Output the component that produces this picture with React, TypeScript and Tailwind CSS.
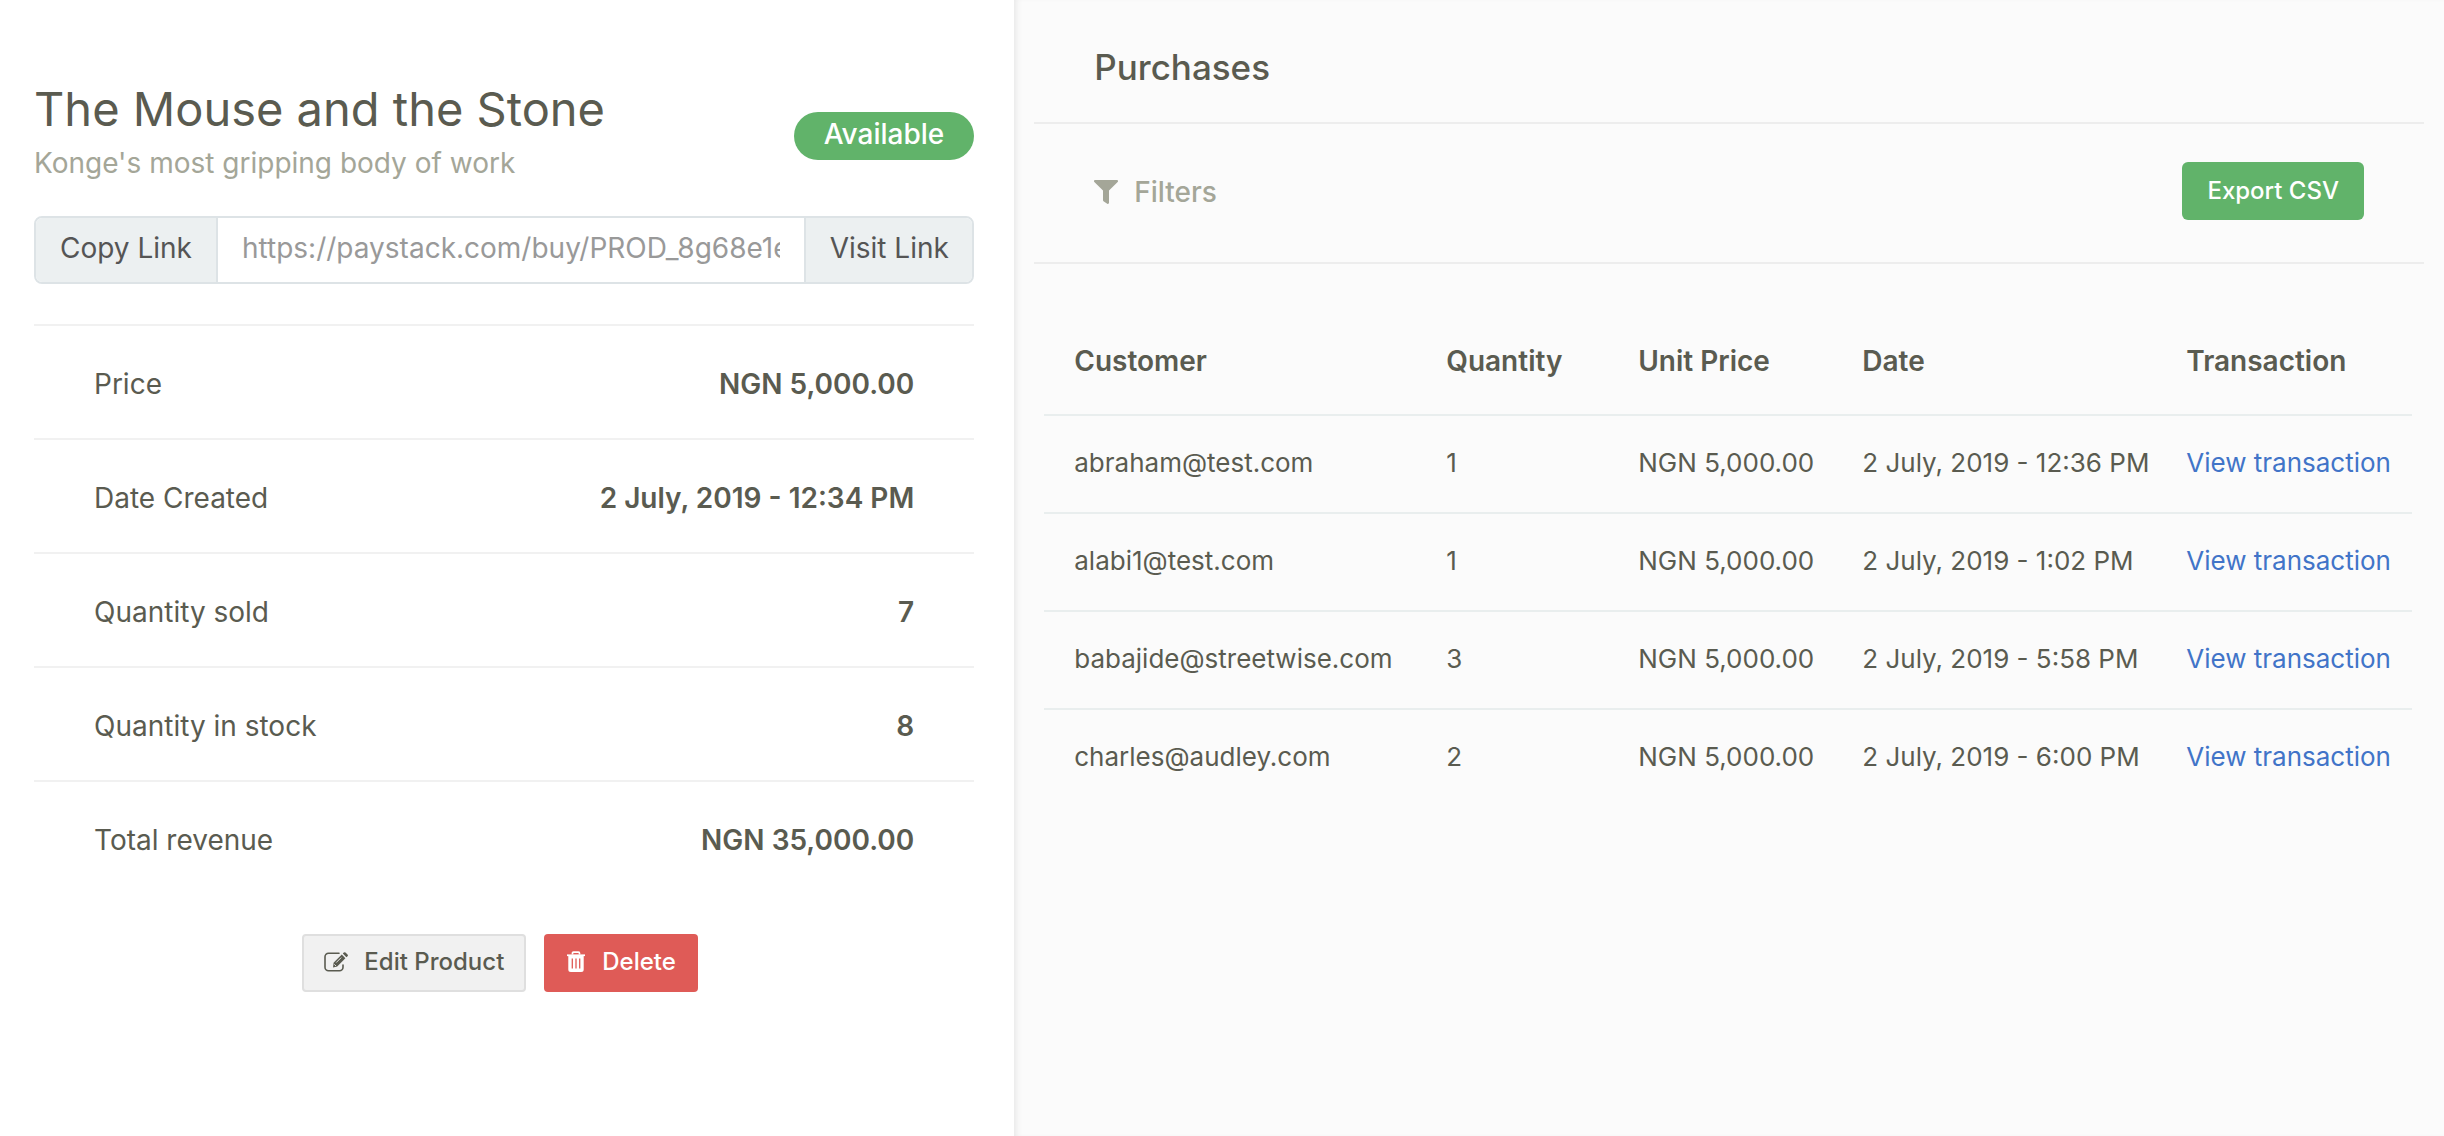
import { FaFilter } from "react-icons/fa";

const PRODUCT = {
  name: "The Mouse and the Stone",
  description: "Konge's most gripping body of work",
  link: "https://paystack.com/buy/PROD_8g68e1e5xk2",
};

const DETAILS = [
  { label: "Price", value: "NGN 5,000.00" },
  { label: "Date Created", value: "2 July, 2019 - 12:34 PM" },
  { label: "Quantity sold", value: "7" },
  { label: "Quantity in stock", value: "8" },
  { label: "Total revenue", value: "NGN 35,000.00" },
];

const PURCHASES = [
  { customer: "abraham@test.com", quantity: 1, price: "NGN 5,000.00", date: "2 July, 2019 - 12:36 PM" },
  { customer: "alabi1@test.com", quantity: 1, price: "NGN 5,000.00", date: "2 July, 2019 - 1:02 PM" },
  { customer: "babajide@streetwise.com", quantity: 3, price: "NGN 5,000.00", date: "2 July, 2019 - 5:58 PM" },
  { customer: "charles@audley.com", quantity: 2, price: "NGN 5,000.00", date: "2 July, 2019 - 6:00 PM" },
];

function EditIcon() {
  return (
    <svg viewBox="0 0 24 20" className="h-5 w-6" fill="none" aria-hidden="true">
      <path
        d="M15 1.2H4.5A3.5 3.5 0 0 0 1 4.7v10.6a3.5 3.5 0 0 0 3.5 3.5h11a3.5 3.5 0 0 0 3.5-3.5V13"
        stroke="currentColor"
        strokeWidth="1.6"
        strokeLinecap="round"
      />
      <path d="M17.8 2.6 21.4 6.2 13.2 14.4 9 15.4l.6-4.6z" fill="currentColor" />
      <path d="m18.8 1.6 1-1a1.2 1.2 0 0 1 1.7 0l2 2a1.2 1.2 0 0 1 0 1.7l-1.1 1z" fill="currentColor" />
      <path d="m12.2 10.6 5-5M10.3 12.3l1.7 1.7" stroke="#f1f1f1" strokeWidth="0.9" />
    </svg>
  );
}

function TrashIcon() {
  return (
    <svg viewBox="0 0 20 22" className="h-[22px] w-5" fill="none" aria-hidden="true">
      <path d="M6.5 3.5V2.2c0-.6.4-1 1-1h5c.6 0 1 .4 1 1v1.3" stroke="currentColor" strokeWidth="1.7" />
      <path d="M1 3.4h18v1.7H1z" fill="currentColor" />
      <path d="M2.3 5h15.4v13.5a2.5 2.5 0 0 1-2.5 2.5H4.8a2.5 2.5 0 0 1-2.5-2.5z" fill="currentColor" />
      <path d="M6.3 7.5v10M10 7.5v10M13.7 7.5v10" stroke="#df5b57" strokeWidth="1.3" />
    </svg>
  );
}

function ProductPanel() {
  return (
    <section className="w-[41.5%] shrink-0 bg-white pt-20 pr-10 pb-36 pl-[34px]">
      <header className="flex items-center justify-between gap-6">
        <div>
          <h1 className="text-[47px] leading-[58px] font-normal">{PRODUCT.name}</h1>
          <p className="text-[28px] leading-[50px] text-[#a4a698]">{PRODUCT.description}</p>
        </div>
        <span className="mt-1 flex h-12 items-center rounded-full bg-[#61b36a] px-[30px] pb-1 text-[28px] font-medium text-white">
          Available
        </span>
      </header>

      <div className="mt-7 flex h-[68px] overflow-hidden rounded-lg border-2 border-[#dde3e6] text-[28px] text-[#555]">
        <button type="button" className="w-[182px] shrink-0 border-r-2 border-[#dde3e6] bg-[#ecf0f1] pb-1">
          Copy Link
        </button>
        <input
          type="text"
          readOnly
          aria-label="Product link"
          value={PRODUCT.link}
          className="mx-6 min-w-0 flex-1 bg-white pb-1 text-[#999] outline-none"
        />
        <a
          href={PRODUCT.link}
          className="flex w-[168px] shrink-0 items-center justify-center border-l-2 border-[#dde3e6] bg-[#ecf0f1] pb-1"
        >
          Visit Link
        </a>
      </div>

      <dl className="mt-10 text-[28px]">
        {DETAILS.map((detail) => (
          <div
            key={detail.label}
            className="flex h-[114px] items-center justify-between border-t-2 border-[#f1f1f1] px-[60px] pt-1"
          >
            <dt>{detail.label}</dt>
            <dd className="font-semibold">{detail.value}</dd>
          </div>
        ))}
      </dl>

      <div className="mt-10 flex justify-center gap-[18px] pr-2 text-2xl">
        <button
          type="button"
          className="flex h-[58px] items-center gap-4 rounded-sm border-2 border-[#dfdfdf] bg-[#f1f1f1] px-5 pb-0.5 font-medium"
        >
          <EditIcon />
          Edit Product
        </button>
        <button
          type="button"
          className="flex h-[58px] items-center gap-4 rounded-sm bg-[#df5b57] px-[22px] pb-0.5 font-medium text-white"
        >
          <TrashIcon />
          Delete
        </button>
      </div>
    </section>
  );
}

function PurchasesPanel() {
  return (
    <section className="min-w-0 flex-1 bg-[#fbfbfb] px-5 shadow-[inset_6px_0_6px_-4px_#e6e6e6]">
      <div className="flex h-[124px] items-center border-b-2 border-[#ededed] px-[60px] pt-3">
        <h2 className="text-[35px] font-medium">Purchases</h2>
      </div>

      <div className="flex h-[140px] items-center justify-between border-b-2 border-[#ededed] px-[60px] pb-1">
        <button type="button" className="flex items-center gap-4 pt-0.5 text-[28px] font-medium text-[#a4a698]">
          <FaFilter className="size-6" />
          Filters
        </button>
        <button type="button" className="h-[58px] rounded-md bg-[#61b36a] px-[25px] text-2xl font-medium text-white">
          Export CSV
        </button>
      </div>

      <div className="mt-11 pr-3 pl-[10px]">
        <table className="w-full table-fixed text-left text-[26px] whitespace-nowrap">
          <thead className="text-[28px]">
            <tr className="h-[107px] border-b-2 border-[#e9eeee]">
              <th className="w-[402px] pl-[30px] font-semibold">Customer</th>
              <th className="w-[192px] font-semibold">Quantity</th>
              <th className="w-[224px] font-semibold">Unit Price</th>
              <th className="w-[324px] font-semibold">Date</th>
              <th className="font-semibold">Transaction</th>
            </tr>
          </thead>
          <tbody>
            {PURCHASES.map((purchase) => (
              <tr key={purchase.customer} className="h-[98px] border-b-2 border-[#e9eeee] last:border-b-0">
                <td className="pb-1 pl-[30px]">{purchase.customer}</td>
                <td className="pb-1">{purchase.quantity}</td>
                <td className="pb-1">{purchase.price}</td>
                <td className="pb-1">{purchase.date}</td>
                <td className="pb-1">
                  <a href="#transaction" className="text-[#4174c8]">
                    View transaction
                  </a>
                </td>
              </tr>
            ))}
          </tbody>
        </table>
      </div>
    </section>
  );
}

export default function App() {
  return (
    <main className="flex min-h-screen font-['Inter',sans-serif] text-[#5a5b50]">
      <ProductPanel />
      <PurchasesPanel />
    </main>
  );
}
